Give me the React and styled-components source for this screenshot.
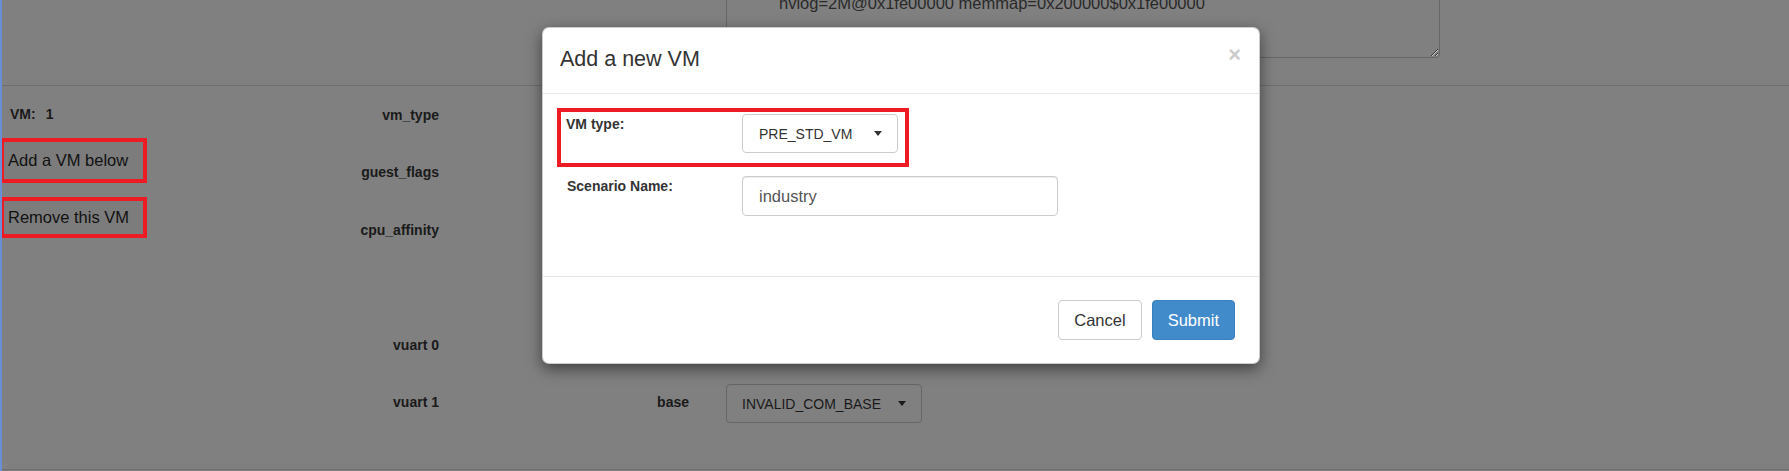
import React from "react";
import styled, { createGlobalStyle } from "styled-components";

const GlobalStyle = createGlobalStyle`
  html, body { margin: 0; padding: 0; background: #808080; }
  body { font-family: "Liberation Sans", Arial, sans-serif; overflow: hidden; }
  * { box-sizing: border-box; }
`;

const Page = styled.div`
  position: relative;
  width: 1789px;
  height: 471px;
  overflow: hidden;
  background: #808080;
  border-left: 2px solid #6b8fd6;
  color: #1a1a1a;
`;

const TopSection = styled.div`
  height: 86px;
  display: flex;
  align-items: flex-end;
  padding: 0 0 27px 724px;
  border-bottom: 1px solid #6e6e6e;
  overflow: hidden;
`;

const BootArgs = styled.textarea`
  flex: none;
  width: 714px;
  height: 98px;
  margin: 0;
  padding: 7px 14px 7px 52px;
  font-family: "Liberation Sans", Arial, sans-serif;
  font-size: 16.5px;
  line-height: 23.5px;
  color: #2a2a2a;
  background: #808080;
  border: 1px solid #666;
  border-radius: 4px;
  resize: vertical;
  outline: none;
  overflow: hidden;
`;

const MainSection = styled.div`
  display: flex;
  height: 384px;
  border-bottom: 1px solid #6e6e6e;
`;

const LeftCol = styled.div`
  width: 148px;
  flex: none;
  display: flex;
  flex-direction: column;
  align-items: flex-start;
  padding-top: 18px;
  margin-left: -2px;
`;

const VmTitle = styled.div`
  display: flex;
  gap: 10px;
  padding-left: 10px;
  font-size: 14px;
  font-weight: bold;
  line-height: 20px;
  margin-bottom: ${(p) => p.$gap}px;
`;

const Highlight = styled.div`
  border: 4px solid #ed1c24;
  width: ${(p) => p.$w}px;
  height: ${(p) => p.$h}px;
  margin-bottom: ${(p) => p.$mb || 0}px;
  flex: none;
`;

const PageButton = styled.button`
  display: flex;
  align-items: center;
  width: 100%;
  height: 100%;
  margin: 0;
  padding: 0 4px;
  border: none;
  background: #7c7c7c;
  color: #111;
  font-family: "Liberation Sans", Arial, sans-serif;
  font-size: 16.5px;
  white-space: nowrap;
`;

const FieldList = styled.div`
  display: flex;
  flex-direction: column;
`;

const FieldRow = styled.div`
  display: flex;
  align-items: center;
  height: 57.5px;
`;

const FieldLabel = styled.div`
  width: ${(p) => p.$w}px;
  flex: none;
  text-align: right;
  font-size: 14px;
  font-weight: bold;
  line-height: 20px;
  color: #1a1a1a;
`;

const PageSelect = styled.div`
  margin-left: 37px;
  width: 196px;
  height: 39px;
  margin-top: 3px;
  display: flex;
  align-items: center;
  justify-content: space-between;
  padding: 0 15px 0 15px;
  border: 1px solid #666;
  border-radius: 4px;
  font-size: 14px;
  color: #1a1a1a;
`;

const Caret = styled.span`
  width: 0;
  height: 0;
  border-top: 5px solid ${(p) => p.$color};
  border-left: 4.5px solid transparent;
  border-right: 4.5px solid transparent;
`;

/* Modal */
const Modal = styled.div`
  position: absolute;
  left: 540px;
  top: 27px;
  width: 718px;
  height: 337px;
  background: #fff;
  border: 1px solid rgba(0, 0, 0, 0.2);
  border-radius: 7px;
  box-shadow: 0 5px 15px rgba(0, 0, 0, 0.5);
  display: flex;
  flex-direction: column;
  color: #333;
`;

const ModalHeader = styled.div`
  display: flex;
  align-items: flex-start;
  justify-content: space-between;
  height: 66px;
  padding: 16px 18px 0 17px;
  border-bottom: 1px solid #e5e5e5;
`;

const ModalTitle = styled.h4`
  margin: 0;
  font-size: 21.5px;
  font-weight: normal;
  line-height: 31px;
  color: #333;
`;

const CloseButton = styled.button`
  margin: 0;
  padding: 0;
  border: none;
  background: transparent;
  font-family: "Liberation Sans", Arial, sans-serif;
  font-size: 22px;
  font-weight: bold;
  line-height: 1;
  color: #000;
  opacity: 0.2;
`;

const ModalBody = styled.div`
  flex: 1;
  padding: 14px 14px 0 14px;
  display: flex;
  flex-direction: column;
  align-items: flex-start;
`;

const FormRow = styled.div`
  display: flex;
  align-items: flex-start;
  padding: ${(p) => p.$pad};
`;

const FormLabel = styled.label`
  width: ${(p) => p.$w}px;
  flex: none;
  font-size: 14px;
  font-weight: bold;
  line-height: 20px;
  color: #333;
`;

const TypeSelect = styled.div`
  width: 156px;
  height: 39px;
  display: flex;
  align-items: center;
  justify-content: space-between;
  padding: 0 15px 0 16px;
  border: 1px solid #ccc;
  border-radius: 4px;
  font-size: 14px;
  color: #333;
`;

const TextInput = styled.input`
  width: 316px;
  height: 40px;
  margin: 0;
  padding: 0 16px;
  border: 1px solid #ccc;
  border-radius: 4px;
  box-shadow: inset 0 1px 1px rgba(0, 0, 0, 0.075);
  font-family: "Liberation Sans", Arial, sans-serif;
  font-size: 16.5px;
  color: #555;
  outline: none;
`;

const ModalFooter = styled.div`
  height: 87px;
  display: flex;
  justify-content: flex-end;
  align-items: flex-start;
  gap: 10px;
  padding: 23px 24px 0 0;
  border-top: 1px solid #e5e5e5;
`;

const FooterButton = styled.button`
  height: 40px;
  margin: 0;
  padding: 0 15px;
  border-radius: 4px;
  border: 1px solid ${(p) => (p.$primary ? "#3a80bf" : "#ccc")};
  background: ${(p) => (p.$primary ? "#428bca" : "#fff")};
  color: ${(p) => (p.$primary ? "#fff" : "#333")};
  font-family: "Liberation Sans", Arial, sans-serif;
  font-size: 16.5px;
  line-height: 1;
`;

const rows = [
  { label: "vm_type" },
  { label: "guest_flags" },
  { label: "cpu_affinity" },
  { label: "" },
  { label: "vuart 0" },
  { label: "vuart 1", sub: "base", value: "INVALID_COM_BASE" },
];

export default function App() {
  return (
    <>
      <GlobalStyle />
      <Page>
        <TopSection>
          <BootArgs
            readOnly
            defaultValue={
              "rw rootwait root=/dev/sda3 console=ttyS0\nhvlog=2M@0x1fe00000 memmap=0x200000$0x1fe00000"
            }
          />
        </TopSection>
        <MainSection>
          <LeftCol>
            <VmTitle $gap={14}>
              <span>VM:</span>
              <span>1</span>
            </VmTitle>
            <Highlight $w={147} $h={45} $mb={14}>
              <PageButton>Add a VM below</PageButton>
            </Highlight>
            <Highlight $w={147} $h={41}>
              <PageButton>Remove this VM</PageButton>
            </Highlight>
          </LeftCol>
          <FieldList>
            {rows.map((r, i) => (
              <FieldRow key={i}>
                <FieldLabel $w={291}>{r.label}</FieldLabel>
                {r.sub && (
                  <>
                    <FieldLabel $w={250}>{r.sub}</FieldLabel>
                    <PageSelect>
                      <span>{r.value}</span>
                      <Caret $color="#1a1a1a" />
                    </PageSelect>
                  </>
                )}
              </FieldRow>
            ))}
          </FieldList>
        </MainSection>

        <Modal>
          <ModalHeader>
            <ModalTitle>Add a new VM</ModalTitle>
            <CloseButton>×</CloseButton>
          </ModalHeader>
          <ModalBody>
            <Highlight $w={352} $h={59} $mb={9}>
              <FormRow $pad="2px 0 0 5px">
                <FormLabel $w={176}>VM type:</FormLabel>
                <TypeSelect>
                  <span>PRE_STD_VM</span>
                  <Caret $color="#333" />
                </TypeSelect>
              </FormRow>
            </Highlight>
            <FormRow $pad="0 0 0 10px">
              <FormLabel $w={175}>Scenario Name:</FormLabel>
              <TextInput defaultValue="industry" />
            </FormRow>
          </ModalBody>
          <ModalFooter>
            <FooterButton>Cancel</FooterButton>
            <FooterButton $primary>Submit</FooterButton>
          </ModalFooter>
        </Modal>
      </Page>
    </>
  );
}
